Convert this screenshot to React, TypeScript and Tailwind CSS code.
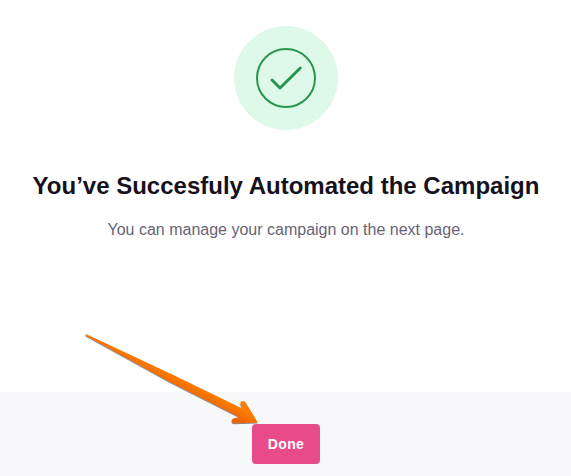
import React from 'react';

function SuccessBadge() {
  return (
    <div className="flex h-[104px] w-[104px] items-center justify-center rounded-full bg-[#def8e9]">
      <svg width="60" height="60" viewBox="0 0 60 60" fill="none" stroke="#28964f">
        <circle cx="30" cy="30" r="29" strokeWidth="2" />
        <path d="M16 32 L24 40 L44.3 20" strokeWidth="3" strokeLinecap="round" strokeLinejoin="round" />
      </svg>
    </div>
  );
}

function PointerArrow() {
  return (
    <svg
      className="pointer-events-none absolute left-20 top-[328px]"
      width="184"
      height="102"
      viewBox="80 328 184 102"
    >
      <defs>
        <linearGradient id="arrow" gradientUnits="userSpaceOnUse" x1="206" y1="390" x2="200" y2="402">
          <stop offset="0" stopColor="#ff7e05" />
          <stop offset="1" stopColor="#e96300" />
        </linearGradient>
        <filter id="shadow" x="-10%" y="-10%" width="120%" height="120%">
          <feDropShadow dx="-0.2" dy="0.9" stdDeviation="0.4" floodColor="#333" floodOpacity="0.65" />
        </filter>
      </defs>
      <path
        d="M85.5 334.5 Q86.2 334 87.5 334.7 L176 376.2 L241.7 408.3 L240.5 404.3 Q240.3 401.2 242.8 401 Q244.8 401 245.8 402.7 L257.8 422.4 L234 423.2 Q231.6 423 231.6 420.8 Q231.8 418.8 234 418.3 L239.3 417 L170 382 L86 335.8 Z"
        fill="url(#arrow)"
        filter="url(#shadow)"
      />
    </svg>
  );
}

export default function App() {
  return (
    <div className="relative flex h-[476px] w-[571px] flex-col overflow-hidden bg-white font-['Liberation_Sans',Arial,sans-serif]">
      <main className="flex flex-1 flex-col items-center pl-px pt-[26px]">
        <SuccessBadge />
        <h1 className="mt-10 whitespace-nowrap text-2xl font-bold text-[#16121c]">
          You’ve Succesfuly Automated the Campaign
        </h1>
        <p className="mt-4 whitespace-nowrap text-base text-[#696375]">
          You can manage your campaign on the next page.
        </p>
      </main>
      <footer className="flex h-[84px] justify-center bg-[#f8f8fb] pl-px pt-8">
        <button className="h-10 w-[68px] rounded bg-[#e74b89] text-sm font-bold tracking-[0.4px] text-white">
          Done
        </button>
      </footer>
      <PointerArrow />
    </div>
  );
}
